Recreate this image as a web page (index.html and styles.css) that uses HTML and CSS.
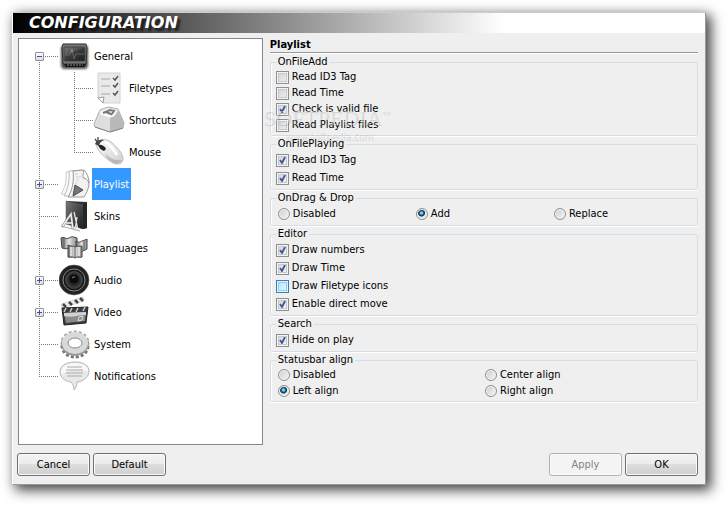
FILE: index.html
```
<!DOCTYPE HTML>
<html lang="en-US">
<head>
    <meta charset="UTF-8">
    <title>Configuration</title>
    <link rel="stylesheet" href="styles.css">
</head>
<body>
<svg class="defs" aria-hidden="true">
    <defs>
        <linearGradient id="dark" x1="0" y1="0" x2="1" y2="1">
            <stop offset="0" stop-color="#777"/>
            <stop offset="1" stop-color="#1c1c1c"/>
        </linearGradient>
        <linearGradient id="light" x1="0" y1="0" x2="1" y2="1">
            <stop offset="0" stop-color="#fdfdfd"/>
            <stop offset="1" stop-color="#cfcfcf"/>
        </linearGradient>
        <linearGradient id="fold" x1="0" y1="0" x2="1" y2="0">
            <stop offset="0" stop-color="#6a6a6a"/>
            <stop offset="0.5" stop-color="#e4e4e4"/>
            <stop offset="1" stop-color="#8a8a8a"/>
        </linearGradient>
        <radialGradient id="cone">
            <stop offset="0" stop-color="#111"/>
            <stop offset="0.6" stop-color="#2a2a2a"/>
            <stop offset="1" stop-color="#4a4a4a"/>
        </radialGradient>
        <filter id="soft" x="-20%" y="-20%" width="140%" height="140%">
            <feGaussianBlur stdDeviation="1.2"/>
        </filter>
    </defs>
</svg>
<div class="window">
    <h1 class="titlebar">CONFIGURATION</h1>
    <form class="config" action="#">
        <div class="main">
            <ul class="tree">
                <li>
                    <div class="node">
                        <span class="branch"><button type="button" class="toggle open" aria-label="Collapse General"></button></span>
                        <svg class="icon" viewBox="0 0 32 32">
                            <rect x="2" y="5" width="27" height="24" rx="4" fill="#222" opacity="0.8" filter="url(#soft)"/>
                            <path d="M4 4h23l1 4-1 16H4L3 8z" fill="#777" stroke="#333"/>
                            <rect x="5" y="7" width="21" height="14" rx="1" fill="url(#dark)" stroke="#444"/>
                            <path d="M6 15h5l2-6 2 10 2-5h8" fill="none" stroke="#8c8c8c"/>
                            <path d="M6 15L25 8v13H6z" fill="#222" opacity="0.4"/>
                            <path d="M5 24h22l-2 3H7z" fill="#161616"/>
                            <path d="M8 25h16" stroke="#888" stroke-dasharray="2 1"/>
                        </svg>
                        <a href="#">General</a>
                    </div>
                    <ul class="sub">
                        <li>
                            <div class="node">
                                <span class="branch"></span>
                                <svg class="icon" viewBox="0 0 32 32">
                                    <path d="M5 1h22v30H10l-5-5z" fill="#e9e9e9" stroke="#d2d2d2"/>
                                    <path d="M5 26l6-1-1 6z" fill="#fff" stroke="#999"/>
                                    <path d="M8 7h9M8 14h9M8 22h9" stroke="#bdbdbd" stroke-width="1.3"/>
                                    <path d="M20 6l2 2 3-4M20 13l2 2 3-4M20 21l2 2 3-4" fill="none" stroke="#555" stroke-width="1.5"/>
                                </svg>
                                <a href="#">Filetypes</a>
                            </div>
                        </li>
                        <li>
                            <div class="node">
                                <span class="branch"></span>
                                <svg class="icon" viewBox="0 0 32 32">
                                    <path d="M1 20L7 6l8-3 10 2 6 14-1 5-13 4L2 23z" fill="#e2e2e2" stroke="#aaa"/>
                                    <path d="M7 7l8-3 10 2-4 7-5 1-9-3z" fill="#fafafa" stroke="#ddd"/>
                                    <path d="M17 14l5-2 3-5 6 12-1 5-13 4z" fill="#b9b9b9"/>
                                    <path d="M7 11l10 3v14L2 23z" fill="#dedede"/>
                                    <path d="M2 23l15 5 13-4" fill="none" stroke="#858585"/>
                                    <path d="M10 9l7-3 4 1-3 4M13 8l5 2" fill="none" stroke="#777" stroke-width="2"/>
                                </svg>
                                <a href="#">Shortcuts</a>
                            </div>
                        </li>
                        <li>
                            <div class="node">
                                <span class="branch"></span>
                                <svg class="icon" viewBox="0 0 32 32">
                                    <path d="M3 8c3-5 9-6 15-2 6 5 12 11 12 17 0 5-5 6-10 4C13 23 4 15 3 8z" fill="url(#light)" stroke="#bbb"/>
                                    <path d="M12 17c4 5 9 8 17 7-2 4-7 4-10 2-3-2-6-5-7-9z" fill="#aaa" opacity="0.7"/>
                                    <path d="M2 8c1-3 5-5 9-4-2 1-5 3-5 6z" fill="#454545"/>
                                    <path d="M5 9c3-1 7 1 8 4l-2 2c-3-1-5-3-6-6z" fill="#222"/>
                                    <path d="M2 3l3 4M5 1v4" stroke="#444" stroke-width="1.3"/>
                                    <path d="M12 6c6 3 9 8 12 13" fill="none" stroke="#fff" stroke-width="3"/>
                                </svg>
                                <a href="#">Mouse</a>
                            </div>
                        </li>
                    </ul>
                </li>
                <li>
                    <div class="node">
                        <span class="branch"><button type="button" class="toggle" aria-label="Expand Playlist"></button></span>
                        <svg class="icon" viewBox="0 0 32 32">
                            <path d="M7 4l12-1-2 24-15-1c4-6 6-14 5-22z" fill="#fafafa" stroke="#ccc"/>
                            <path d="M10 3l13-1v26L5 28c4-7 6-16 5-25z" fill="#fafafa" stroke="#bbb"/>
                            <path d="M14 3l11-1c3 4 5 10 5 15-1 5-3 9-5 12H9c5-8 6-17 5-26z" fill="#f2f2f2" stroke="#999"/>
                            <path d="M16 6h3M17 9h5M17 12h3M16 15h2" stroke="#d0d0d0"/>
                            <path d="M25 2c-1 4-1 6-1 8 3 0 5 2 6 5 0-5-2-10-5-13z" fill="#fff" stroke="#999"/>
                            <path d="M16 17l8 5-10 6z" fill="#777" stroke="#4a4a4a"/>
                        </svg>
                        <a href="#" class="selected">Playlist</a>
                    </div>
                </li>
                <li>
                    <div class="node">
                        <span class="branch"></span>
                        <svg class="icon" viewBox="0 0 32 32">
                            <path d="M7 1l21 1v26l-4 1-17-6z" fill="#333"/>
                            <path d="M7 1l17 4v24L7 24z" fill="url(#dark)" stroke="#555" stroke-width="0.5"/>
                            <path d="M24 5l4-3v26l-4 1z" fill="#252525"/>
                            <path d="M3 27l9-13 2 15M7 23h6" fill="none" stroke="#777" stroke-width="2.5"/>
                            <path d="M3 27l9-13 2 15M7 23h6" fill="none" stroke="#eee" stroke-width="1.5"/>
                            <path d="M15 12l4 18M18 17l-2 13" stroke="#e3e3e3" stroke-width="1.3"/>
                            <path d="M2 26l19 5" stroke="#aaa"/>
                        </svg>
                        <a href="#">Skins</a>
                    </div>
                </li>
                <li>
                    <div class="node">
                        <span class="branch"></span>
                        <svg class="icon" viewBox="0 0 32 32">
                            <path d="M2 6c3-2 5 2 8 0s5-1 8 0v10c-3 2-5-1-8 0s-5 1-7 0z" fill="url(#fold)" stroke="#444"/>
                            <path d="M17 9c3 2 4 1 6 0s4-1 5-2v10c-3 2-6 3-11 2z" fill="url(#fold)" stroke="#444"/>
                            <path d="M9 13c3 2 5 0 7 2 3-2 5 0 7-1v11c-3 1-5-1-7 1-2-2-4 0-7-1z" fill="url(#fold)" stroke="#444"/>
                            <path d="M16 15v11M5 6v10M25 9v9" stroke="#555"/>
                            <path d="M12 15v9M20 15v9" stroke="#ececec" stroke-width="1.5"/>
                        </svg>
                        <a href="#">Languages</a>
                    </div>
                </li>
                <li>
                    <div class="node">
                        <span class="branch"><button type="button" class="toggle" aria-label="Expand Audio"></button></span>
                        <svg class="icon" viewBox="0 0 32 32">
                            <circle cx="15" cy="16" r="15" fill="#222" stroke="#555" stroke-width="0.5"/>
                            <circle cx="15" cy="16" r="11" fill="#111" stroke="#8a8a8a"/>
                            <circle cx="15" cy="16" r="9" fill="url(#cone)"/>
                            <circle cx="15" cy="15" r="5" fill="#0c0c0c" stroke="#252525"/>
                            <path d="M13 14a3 3 0 0 1 3-1" fill="none" stroke="#999"/>
                        </svg>
                        <a href="#">Audio</a>
                    </div>
                </li>
                <li>
                    <div class="node">
                        <span class="branch"><button type="button" class="toggle" aria-label="Expand Video"></button></span>
                        <svg class="icon" viewBox="0 0 32 32">
                            <path d="M2 8l22-7 1 4-22 7z" fill="#ececec" stroke="#bbb" stroke-width="0.5"/>
                            <path d="M4 8l3 3M10 6l3 3M16 4l3 3M21 2l3 3" stroke="#444" stroke-width="2.5"/>
                            <path d="M3 12l26-1-2 16-22 2z" fill="#3c3c3c" stroke="#222"/>
                            <path d="M5 17l22-1-1 9-19 2z" fill="#8a8a8a"/>
                            <path d="M5 17l22-1v3c-9 0-13 3-22 1z" fill="#d2d2d2"/>
                            <path d="M7 12l-2 4M13 12l-2 4M19 12l-2 4M26 11l-2 4" stroke="#ccc" stroke-width="1.5"/>
                            <path d="M20 21l4-1-1 4-4 1z" fill="none" stroke="#ddd"/>
                        </svg>
                        <a href="#">Video</a>
                    </div>
                </li>
                <li>
                    <div class="node">
                        <span class="branch"></span>
                        <svg class="icon" viewBox="0 0 32 32">
                            <ellipse cx="16" cy="18" rx="13" ry="11" fill="none" stroke="#777" stroke-width="3" stroke-dasharray="3 2"/>
                            <ellipse cx="16" cy="15" rx="13" ry="11" fill="none" stroke="#aaa" stroke-width="3" stroke-dasharray="3 2"/>
                            <ellipse cx="16" cy="17" rx="10" ry="8" fill="none" stroke="#999" stroke-width="6"/>
                            <ellipse cx="16" cy="15" rx="10" ry="8" fill="none" stroke="#d9d9d9" stroke-width="6"/>
                            <ellipse cx="16" cy="15" rx="7" ry="5" fill="#fff" stroke="#8a8a8a"/>
                        </svg>
                        <a href="#">System</a>
                    </div>
                </li>
                <li>
                    <div class="node">
                        <span class="branch"></span>
                        <svg class="icon" viewBox="0 0 32 32">
                            <path d="M16 2c9 0 14 4 14 9s-4 10-12 11c0 3-1 6-3 8 0-3-1-6-3-8-7-1-11-5-11-10C1 6 7 2 16 2z" fill="#e9e9e9" stroke="#b5b5b5"/>
                            <path d="M16 3c8 0 13 3 13 8-9-2-18-1-27 3C1 7 8 3 16 3z" fill="#f8f8f8"/>
                            <path d="M8 7h15M7 10h17M7 13h17M8 16h15" stroke="#aaa"/>
                        </svg>
                        <a href="#">Notifications</a>
                    </div>
                </li>
            </ul>

            <div class="page">
                <h2>Playlist</h2>
                <fieldset class="dense">
                    <legend>OnFileAdd</legend>
                    <label><input type="checkbox">Read ID3 Tag</label>
                    <label><input type="checkbox">Read Time</label>
                    <label><input type="checkbox" checked>Check is valid file</label>
                    <label><input type="checkbox">Read Playlist files</label>
                    <div class="watermark" aria-hidden="true">
                        <span class="brand">SOFTPEDIA<sup>™</sup></span>
                        <span class="site">www.softpedia.com</span>
                    </div>
                </fieldset>
                <fieldset>
                    <legend>OnFilePlaying</legend>
                    <label><input type="checkbox" checked>Read ID3 Tag</label>
                    <label><input type="checkbox" checked>Read Time</label>
                </fieldset>
                <fieldset>
                    <legend>OnDrag &amp; Drop</legend>
                    <div class="radios three">
                        <label><input type="radio" name="drop">Disabled</label>
                        <label><input type="radio" name="drop" checked>Add</label>
                        <label><input type="radio" name="drop">Replace</label>
                    </div>
                </fieldset>
                <fieldset>
                    <legend>Editor</legend>
                    <label><input type="checkbox" checked>Draw numbers</label>
                    <label><input type="checkbox" checked>Draw Time</label>
                    <label><input type="checkbox" class="hot">Draw Filetype icons</label>
                    <label><input type="checkbox" checked>Enable direct move</label>
                </fieldset>
                <fieldset>
                    <legend>Search</legend>
                    <label><input type="checkbox" checked>Hide on play</label>
                </fieldset>
                <fieldset class="dense">
                    <legend>Statusbar align</legend>
                    <div class="radios two">
                        <label><input type="radio" name="align">Disabled</label>
                        <label><input type="radio" name="align">Center align</label>
                        <label><input type="radio" name="align" checked>Left align</label>
                        <label><input type="radio" name="align">Right align</label>
                    </div>
                </fieldset>
            </div>
        </div>
        <div class="buttons">
            <button type="button">Cancel</button>
            <button type="button">Default</button>
            <button type="button" class="apply" disabled>Apply</button>
            <button type="submit">OK</button>
        </div>
    </form>
</div>
</body>
</html>
```

FILE: styles.css
```
/* Reset */
* {
    box-sizing: border-box;
}
body,h1,h2,ul,form,fieldset,legend,input,button {
    margin: 0;
    padding: 0;
}
body {
    display: flex;
    min-height: 100vh;
    padding: 12px 20px 20px 12px;
    background: #fff;
    color: #000;
    font: 11px/14px Tahoma, "DejaVu Sans Condensed", "DejaVu Sans", sans-serif;
}
ul {
    list-style: none;
}
button,input {
    font: inherit;
}
.defs {
    position: absolute;
    width: 0;
    height: 0;
}

/* Window */
.window {
    flex: 1;
    display: flex;
    flex-direction: column;
    background: #efefef;
    border: 1px solid #999;
    border-top-color: #ccc;
    border-left-color: #fff;
    box-shadow: 4px 4px 12px 1px rgba(0,0,0,.75);
}
.titlebar {
    height: 20px;
    padding-left: 16px;
    background: linear-gradient(to right, #000, #fff 71%);
    color: #fff;
    font: italic bold 16px/20px "DejaVu Sans", sans-serif;
    text-shadow: 3px 3px 2px rgba(0,0,0,.6);
}
.config {
    flex: 1;
    display: flex;
    flex-direction: column;
    padding: 5px 7px 8px 4px;
}
.main {
    flex: 1;
    display: flex;
    gap: 7px;
    padding-left: 1px;
}

/* Tree */
.tree {
    flex: 0 0 36%;
    padding-top: 1px;
    background: #fff;
    border: 1px solid #828790;
}
.tree li {
    background: repeating-linear-gradient(to bottom, #777 0 1px, transparent 1px 2px) 20px 0 / 1px 100% no-repeat;
}
.tree > li:first-child {
    background-position: 20px 16px;
}
.tree > li:last-child {
    background-size: 1px 16px;
}
.tree .sub {
    margin-left: 55px;
}
.tree .sub li {
    background-position: 0 0;
}
.tree .sub li:last-child {
    background-size: 1px 16px;
}
.node {
    display: flex;
    align-items: center;
    height: 32px;
}
.branch {
    width: 40px;
    height: 9px;
    padding-left: 16px;
    background: repeating-linear-gradient(to right, #777 0 1px, transparent 1px 2px) 20px 4px / 20px 1px no-repeat;
}
.sub .branch {
    width: 19px;
    padding: 0;
    background-position: 0 4px;
}
.toggle {
    display: block;
    width: 9px;
    height: 9px;
    border: 1px solid #919191;
    border-radius: 1px;
    background:
        linear-gradient(#3353a5, #3353a5) center / 5px 1px no-repeat,
        linear-gradient(#3353a5, #3353a5) center / 1px 5px no-repeat,
        linear-gradient(#fff, #ddd);
}
.toggle.open {
    background:
        linear-gradient(#3353a5, #3353a5) center / 5px 1px no-repeat,
        linear-gradient(#fff, #ddd);
}
.icon {
    width: 32px;
    height: 32px;
    margin-right: 1px;
}
.sub .icon {
    margin-right: 2px;
}
.node a {
    padding: 2px 2px 0;
    color: #000;
    line-height: 30px;
    text-decoration: none;
}
.node .selected {
    background: #39f;
    color: #fff;
}

/* Options page */
.page {
    flex: 1;
    display: flex;
    flex-direction: column;
    gap: 1px;
}
.page h2 {
    height: 15px;
    margin-bottom: 1px;
    border-bottom: 1px solid #999;
    box-shadow: 0 1px #fff;
    font-size: 11px;
    line-height: 14px;
}
fieldset {
    position: relative;
    min-width: 0;
    padding: 0 5px 2px;
    border: 1px solid #d2dde7;
    border-radius: 3px;
    box-shadow: 0 1px #fff, inset 1px 0 #fff;
}
legend {
    padding: 0 2px;
}
fieldset label {
    display: flex;
    align-items: center;
    gap: 3px;
    height: 18px;
}
.dense label {
    height: 16px;
}
.radios {
    display: grid;
    padding-left: 2px;
}
.three {
    grid-template-columns: repeat(3, 1fr);
}
.two {
    grid-template-columns: repeat(2, 1fr);
}

/* Check boxes and radios */
input {
    appearance: none;
    width: 13px;
    height: 13px;
    border: 1px solid #8e8f8f;
    background: linear-gradient(135deg, #c9cdd3, #f6f6f6);
    box-shadow: inset 0 0 0 1px #f4f4f4, inset 0 0 0 2px #c5c9ce;
}
input[type=checkbox]:checked {
    background:
        url("data:image/svg+xml,%3Csvg xmlns='http://www.w3.org/2000/svg' viewBox='0 0 11 11'%3E%3Cpath d='M3 5l2 3 3-6' fill='none' stroke='%23405693' stroke-width='1.8'/%3E%3C/svg%3E"),
        linear-gradient(135deg, #d0d4da, #f6f6f6);
}
input.hot {
    border-color: #3c7fb1;
    background: linear-gradient(135deg, #b5e0f8, #eff9ff);
    box-shadow: inset 0 0 0 1px #def3ff, inset 0 0 0 2px #8bd0f5;
}
input[type=radio] {
    width: 12px;
    height: 12px;
    border-radius: 50%;
    box-shadow: inset 0 0 0 1px #f4f4f4;
}
input[type=radio]:checked {
    background: radial-gradient(circle at 45% 40%, #7fd0ee 0 1px, #176a96 2px, #0d2d4a 3px, #e4e7ea 4px);
}

/* Watermark lies over the first group */
.watermark {
    position: absolute;
    top: 36px;
    left: -8px;
    pointer-events: none;
    color: rgba(255,255,255,.4);
    text-shadow: 1px 1px 1px rgba(0,0,0,.15);
}
.watermark span {
    display: block;
}
.brand {
    font: 22px/26px "Liberation Serif", serif;
    white-space: nowrap;
}
.brand sup {
    font-size: 9px;
    line-height: 9px;
}
.site {
    padding-left: 22px;
    font-size: 10px;
    line-height: 12px;
}

/* Buttons */
.buttons {
    display: flex;
    gap: 3px;
    padding-top: 8px;
}
.buttons button {
    width: 73px;
    height: 23px;
    border: 1px solid #707070;
    border-radius: 3px;
    background: linear-gradient(#f3f3f3, #ebebeb 50%, #ddd 50%, #cfcfcf);
    box-shadow: inset 0 0 0 1px #fafafa;
    color: #000;
}
.buttons .apply {
    margin-left: auto;
    border-color: #adb2b5;
    background: #f4f4f4;
    color: #838383;
}
```
